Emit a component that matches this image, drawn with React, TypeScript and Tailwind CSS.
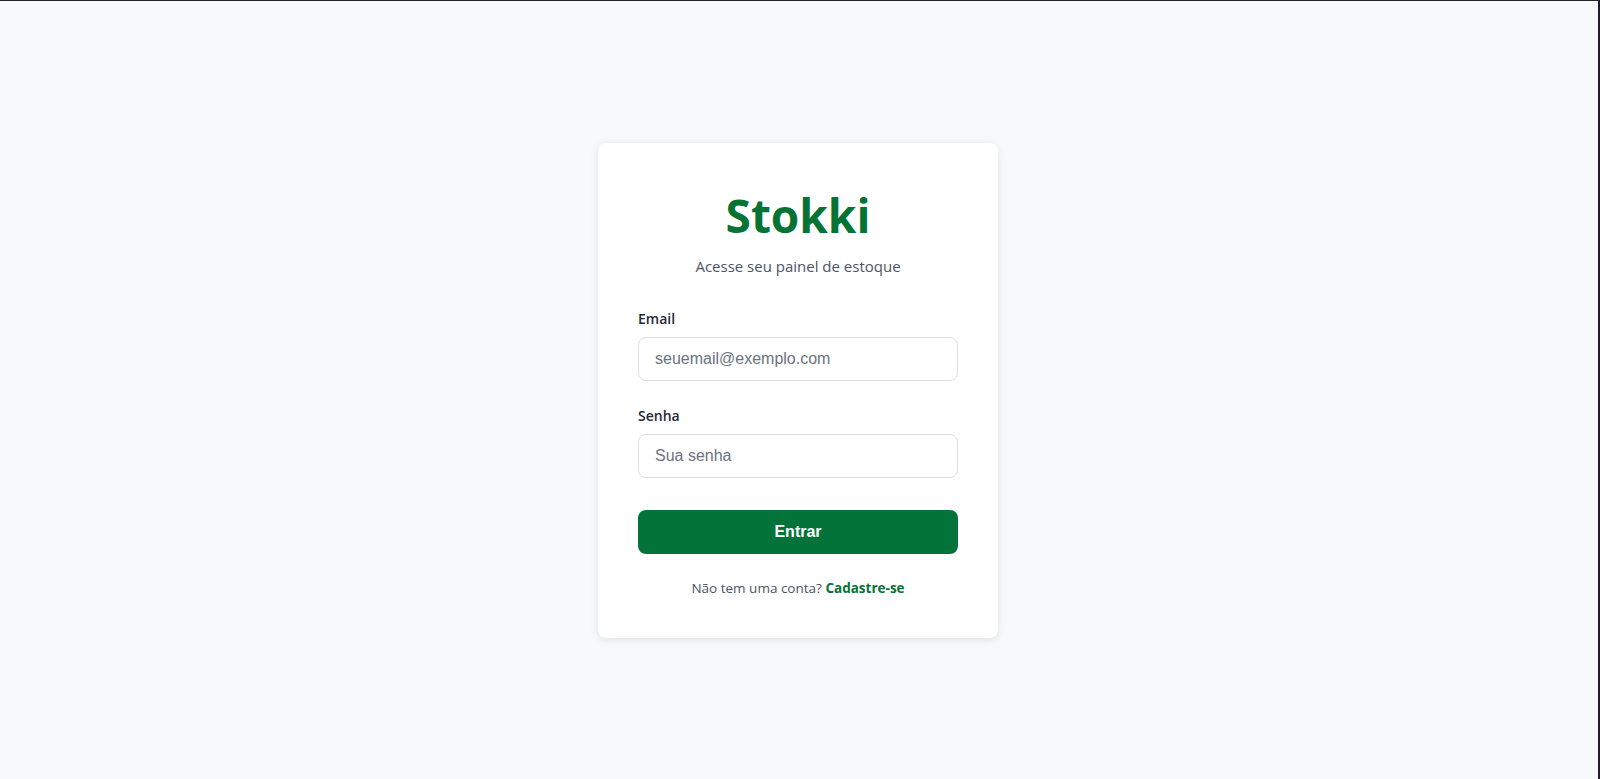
export default function App() {
  return (
    <div className="min-h-[779px] h-screen w-full bg-[#f8f9fa] border-t border-t-[#232323] border-r-2 border-r-[#221c28] flex items-start justify-center">
      {/* login card */}
      <div className="mt-[142px] mr-[2px] w-[400px] bg-white rounded-lg shadow-[0_2px_8px_rgba(0,0,0,0.1)] p-10 font-['Open_Sans',sans-serif]">
        <h1 className="text-center text-[46px] leading-[64px] font-bold text-[#047334]">Stokki</h1>
        <p className="text-center text-[15px] leading-[21px] text-[#4b5563] mt-[9px]">Acesse seu painel de estoque</p>

        <form className="mt-8" onSubmit={(e) => e.preventDefault()}>
          <div className="mb-[25px]">
            <label className="block text-[14px] leading-5 font-semibold text-[#1f2937] mb-2">Email</label>
            <input
              type="email"
              placeholder="seuemail@exemplo.com"
              className="block w-full h-11 px-4 border border-[#dcdee3] rounded-lg text-base font-['Liberation_Sans',Arial,sans-serif] placeholder:text-[#6b7280] outline-none"
            />
          </div>
          <div className="mb-6">
            <label className="block text-[14px] leading-5 font-semibold text-[#1f2937] mb-2">Senha</label>
            <input
              type="password"
              placeholder="Sua senha"
              className="block w-full h-11 px-4 border border-[#dcdee3] rounded-lg text-base font-['Liberation_Sans',Arial,sans-serif] placeholder:text-[#6b7280] outline-none"
            />
          </div>
          <button
            type="submit"
            className="mt-2 w-full h-11 rounded-lg bg-[#03733a] text-white text-base font-bold font-['Liberation_Sans',Arial,sans-serif]"
          >
            Entrar
          </button>
        </form>

        <p className="mt-6 text-center text-[13.5px] leading-5 text-[#4b5563]">
          Não tem uma conta? <a href="#" className="font-bold text-[#047334]">Cadastre-se</a>
        </p>
      </div>
    </div>
  )
}
